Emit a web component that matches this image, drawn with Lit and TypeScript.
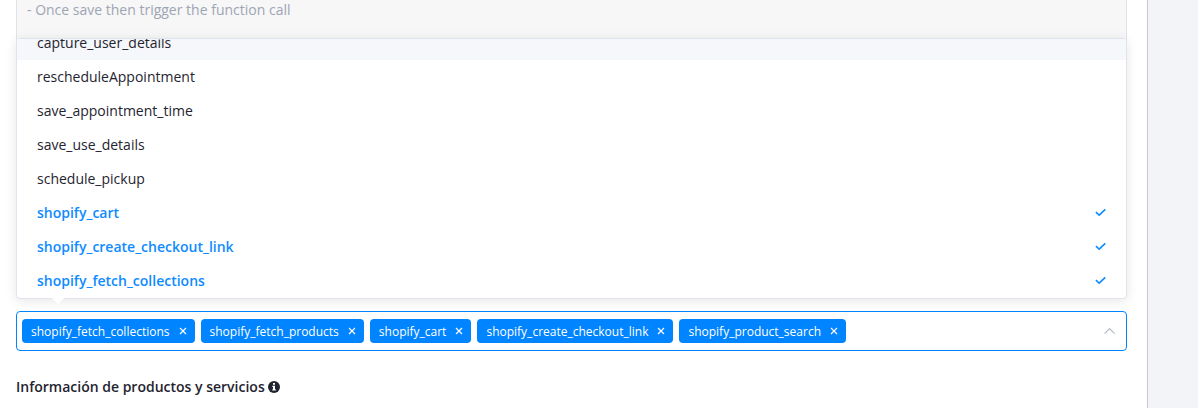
import { LitElement, html, css, svg } from "lit";
import { customElement, state } from "lit/decorators.js";
import { classMap } from "lit/directives/class-map.js";

const OPTIONS = [
  "capture_user_details",
  "rescheduleAppointment",
  "save_appointment_time",
  "save_use_details",
  "schedule_pickup",
  "shopify_cart",
  "shopify_create_checkout_link",
  "shopify_fetch_collections",
];

const checkIcon = svg`<path d="M0.9 5.2 4.2 8.2 10.3 2.4" fill="none" stroke="currentColor" stroke-width="1.6"/>`;
const closeIcon = svg`<path d="M1 1 7 7M7 1 1 7" fill="none" stroke="currentColor" stroke-width="1.2"/>`;

@customElement("app-root")
export class AppRoot extends LitElement {
  @state() private selected = [
    "shopify_fetch_collections",
    "shopify_fetch_products",
    "shopify_cart",
    "shopify_create_checkout_link",
    "shopify_product_search",
  ];
  @state() private active = "capture_user_details";

  static styles = css`
    :host {
      display: flex;
      height: 100vh;
      overflow: hidden;
      font-family: "Open Sans", "Noto Sans", sans-serif;
      font-size: 14px;
      color: #1f2430;
      background: #fff;
    }
    * {
      box-sizing: border-box;
    }
    main {
      flex: 1;
      min-width: 0;
      padding: 0 20px 0 16px;
      border-right: 1px solid #c8c9cb;
    }
    aside {
      width: 50px;
      background: #f3f4f7;
    }
    textarea {
      display: block;
      width: 100%;
      height: 280px;
      padding: 0 10px;
      border: solid #dfe3ec;
      border-width: 0 1px 1px;
      border-radius: 0 0 4px 4px;
      background: #f7f7f7;
      font: inherit;
      line-height: 20px;
      resize: none;
      outline: none;
    }
    textarea::placeholder {
      color: #9da5b4;
      opacity: 1;
    }
    .field {
      position: relative;
      margin-top: 31px;
    }
    .popper {
      position: absolute;
      z-index: 1;
      left: 0;
      right: 0;
      bottom: 100%;
      margin-bottom: 12px;
      border: 1px solid #e0e4ee;
      border-radius: 4px;
      background: #fff;
      box-shadow: 0 2px 12px rgba(0, 0, 0, 0.1);
    }
    .arrow {
      position: absolute;
      top: 100%;
      left: 35px;
      border: 6px solid transparent;
      border-top-color: #fff;
      border-bottom: 0;
    }
    .options {
      display: flex;
      flex-direction: column;
      justify-content: flex-end;
      height: 259px;
      margin: 0;
      padding: 0;
      overflow: hidden;
      list-style: none;
    }
    .option {
      display: flex;
      flex: none;
      align-items: center;
      justify-content: space-between;
      height: 34px;
      padding: 0 20px 2px;
      cursor: pointer;
    }
    .option.active {
      background: #f5f7fa;
    }
    .option.selected {
      color: #0f8bff;
      font-weight: 600;
    }
    .select {
      display: flex;
      align-items: center;
      gap: 6px;
      min-height: 40px;
      padding: 0 10px 0 5px;
      border: 1px solid #0084ff;
      border-radius: 4px;
      background: #fff;
    }
    .tag {
      display: flex;
      align-items: center;
      gap: 9px;
      height: 24px;
      padding: 0 8px 0 9px;
      border-radius: 4px;
      background: #0084ff;
      color: #fff;
      font-size: 12px;
      white-space: nowrap;
    }
    button {
      display: flex;
      padding: 0;
      border: 0;
      background: none;
      color: inherit;
      cursor: pointer;
    }
    .toggle {
      margin-left: auto;
      color: #b4bac4;
    }
    .heading {
      display: flex;
      align-items: center;
      gap: 3px;
      margin: 26px 0 0;
      font-size: 14px;
      line-height: 20px;
      font-weight: 600;
    }
  `;

  private toggle(name: string) {
    this.selected = this.selected.includes(name)
      ? this.selected.filter((s) => s !== name)
      : [...this.selected, name];
  }

  render() {
    return html`
      <main>
        <textarea aria-label="Prompt" placeholder="- Once save then trigger the function call"></textarea>
        <div class="field">
          <div class="popper">
            <ul class="options" id="options" role="listbox" aria-label="Functions" aria-multiselectable="true">
              ${OPTIONS.map((name) => {
                const selected = this.selected.includes(name);
                return html`<li
                  role="option"
                  aria-selected=${selected}
                  class=${classMap({ option: true, selected, active: name === this.active })}
                  @mouseenter=${() => (this.active = name)}
                  @click=${() => this.toggle(name)}
                >
                  <span>${name}</span>
                  ${selected ? html`<svg width="11" height="10" viewBox="0 0 11 10">${checkIcon}</svg>` : ""}
                </li>`;
              })}
            </ul>
            <span class="arrow"></span>
          </div>
          <div class="select">
            ${this.selected.map(
              (name) => html`<span class="tag"
                >${name}<button aria-label="Remove ${name}" @click=${() => this.toggle(name)}>
                  <svg width="8" height="8" viewBox="0 0 8 8">${closeIcon}</svg>
                </button></span
              >`
            )}
            <button class="toggle" aria-label="Close list" aria-expanded="true" aria-controls="options">
              <svg width="12" height="8" viewBox="0 0 12 8">
                <path d="M0.6 6.7 5.6 1.6 10.6 6.7" fill="none" stroke="currentColor" stroke-width="1.2" />
              </svg>
            </button>
          </div>
        </div>
        <h2 class="heading">
          Información de productos y servicios
          <svg width="12" height="12" viewBox="0 0 12 12" aria-hidden="true">
            <circle cx="6" cy="6" r="6" fill="currentColor" />
            <path d="M5 2h2v1.8H5zM4.3 4.8H7v3.4h.8v1.3H4.3V8.2H5V6.1h-.7z" fill="#fff" />
          </svg>
        </h2>
      </main>
      <aside></aside>
    `;
  }
}
